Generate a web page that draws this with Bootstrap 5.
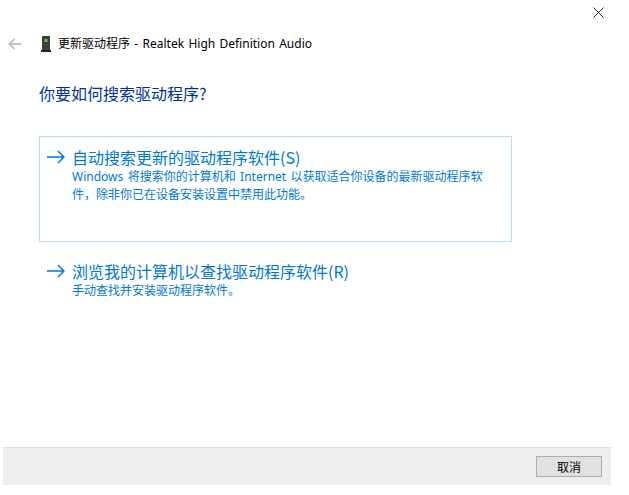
<!DOCTYPE html>
<html lang="zh"><head><meta charset="utf-8">
<link href="https://cdn.jsdelivr.net/npm/bootstrap@5.3.0/dist/css/bootstrap.min.css" rel="stylesheet">
<style>
html,body{height:100%;margin:0;background:#fff;overflow:hidden}
body{font-family:"Noto Sans","Noto Sans CJK SC",sans-serif;color:#000}
.shell{width:611px;height:485px}
.closerow{height:24px}
.closebtn{width:26px;height:24px}
.hdr{height:39px;padding-left:8px}
.backico{margin-right:18px}
.devico{margin-right:6px}
.hdrtxt{font-family:"Noto Sans","Noto Sans CJK SC",sans-serif;font-size:12px;word-spacing:1.2px}
.q{font-size:16px;color:#003399;margin:19px 0 0 39px;line-height:22px;font-family:"Noto Sans CJK SC",sans-serif}
.cmd{width:473px;margin-left:39px;padding:9px 7px;color:#0078d7;border:1px solid transparent}
.cmd.active-one{height:106px;border-color:#b9dcf3;margin-top:32px}
.cmd.second{margin-top:8px}
.arrowico{margin-right:7px}
.cmd h2{font-size:16px;line-height:22px;margin:0;font-weight:400;font-family:"Noto Sans CJK SC",sans-serif}
.cmd p{font-size:12px;line-height:18px;margin:0 0 0 25px;width:418px;word-spacing:1.3px;font-family:"Noto Sans","Noto Sans CJK SC",sans-serif}
.foot{height:38px;background:#eeeeee;border-top:1px solid #dfdfdf;margin-left:3px;padding-right:9px}
.cancel{width:66px;height:21px;border:1px solid #adadad;background:#e1e1e1;font-size:12px;line-height:19px;text-align:center;padding:0;border-radius:0;color:#000;font-family:"Noto Sans CJK SC",sans-serif}
</style></head><body>
<div class="shell d-flex flex-column">
<div class="closerow d-flex justify-content-end"><div class="closebtn d-flex align-items-center justify-content-center">
<svg width="11" height="11" viewBox="0 0 11 11"><path d="M.5.5l10 10M10.500.5l-10 10" stroke="#222" fill="none"/></svg></div></div>
<div class="hdr d-flex align-items-center">
<svg class="backico" width="14" height="12" viewBox="0 0 14 12"><path d="M13 6H2M6.500 1L1.500 6l5 5" stroke="#c2c2c2" stroke-width="1.800" fill="none"/></svg>
<svg class="devico" width="12" height="16" viewBox="0 0 12 16"><rect x="2" y="0" width="8" height="14" fill="#3a3f40"/><rect x="4.500" y="3" width="3" height="3" fill="#4fd34f"/><rect x="1" y="14" width="10" height="2" fill="#222"/></svg>
<span class="hdrtxt">更新驱动程序 - Realtek High Definition Audio</span></div>
<div class="q">你要如何搜索驱动程序?</div>
<div class="cmd active-one">
<div class="d-flex align-items-center"><svg class="arrowico" width="18" height="14" viewBox="0 0 18 14"><path d="M0 7h17M11 1l6 6-6 6" stroke="#0078d7" stroke-width="1.500" fill="none"/></svg><h2>自动搜索更新的驱动程序软件(S)</h2></div>
<p>Windows 将搜索你的计算机和 Internet 以获取适合你设备的最新驱动程序软件，除非你已在设备安装设置中禁用此功能。</p></div>
<div class="cmd second">
<div class="d-flex align-items-center"><svg class="arrowico" width="18" height="14" viewBox="0 0 18 14"><path d="M0 7h17M11 1l6 6-6 6" stroke="#0078d7" stroke-width="1.500" fill="none"/></svg><h2>浏览我的计算机以查找驱动程序软件(R)</h2></div>
<p>手动查找并安装驱动程序软件。</p></div>
<div class="foot mt-auto d-flex align-items-center justify-content-end"><button class="btn cancel">取消</button></div>
</div>
</body></html>
